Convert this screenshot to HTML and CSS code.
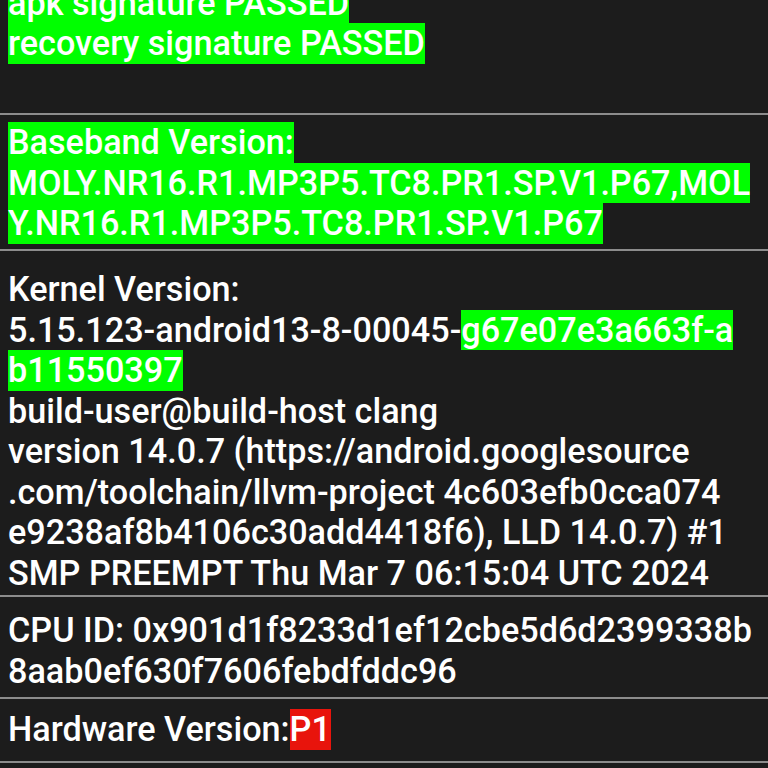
FILE: index.html
```html
<!DOCTYPE html>
<html>
<head>
<meta charset="utf-8">
<link rel="stylesheet" href="styles.css">
</head>
<body>
<div class="list">
  <div class="item item-sig">
    <div class="line"><span class="hl">apk signature PASSED</span></div>
    <div class="line"><span class="hl">recovery signature PASSED</span></div>
    <div class="line"></div>
  </div>
  <div class="sep"></div>
  <div class="item item-baseband">
    <div class="line"><span class="hl">Baseband Version:</span></div>
    <div class="line"><span class="hl">MOLY.NR16.R1.MP3P5.TC8.PR1.SP.V1.P67,MOL</span></div>
    <div class="line"><span class="hl">Y.NR16.R1.MP3P5.TC8.PR1.SP.V1.P67</span></div>
  </div>
  <div class="sep"></div>
  <div class="item item-kernel">
    <div class="line">Kernel Version:</div>
    <div class="line">5.15.123-android13-8-00045-<span class="hl">g67e07e3a663f-a</span></div>
    <div class="line"><span class="hl">b11550397</span></div>
    <div class="line">build-user@build-host clang</div>
    <div class="line">version 14.0.7 (https://android.googlesource</div>
    <div class="line">.com/toolchain/llvm-project 4c603efb0cca074</div>
    <div class="line">e9238af8b4106c30add4418f6), LLD 14.0.7) #1</div>
    <div class="line">SMP PREEMPT Thu Mar 7 06:15:04 UTC 2024</div>
  </div>
  <div class="sep"></div>
  <div class="item item-cpu">
    <div class="line">CPU ID: 0x901d1f8233d1ef12cbe5d6d2399338b</div>
    <div class="line">8aab0ef630f7606febdfddc96</div>
  </div>
  <div class="sep"></div>
  <div class="item item-hw">
    <div class="line">Hardware Version:<span class="hl-red">P1</span></div>
  </div>
  <div class="sep"></div>
</div>
</body>
</html>
```

FILE: styles.css
```css
html, body {
  margin: 0;
  padding: 0;
  background: #1c1c1c;
  height: 100%;
  overflow: hidden;
}
.list {
  font-family: Roboto, "Noto Sans", sans-serif;
  font-size: 34.2px;
  font-weight: 500;
  color: #ffffff;
}
.item {
  padding-left: 8px;
}
.line {
  height: 40.5px;
  line-height: 40.5px;
  white-space: nowrap;
}
.hl {
  display: inline-block;
  background: #00ff00;
  height: 40.5px;
}
.hl-red {
  display: inline-block;
  background: #e8140c;
  height: 40.5px;
}
.sep {
  height: 2px;
  background: #8c8c8c;
}
.item-sig {
  margin-top: -17.5px;
  padding-bottom: 9px;
}
.item-baseband {
  padding-top: 7px;
  padding-bottom: 5.5px;
}
.item-kernel {
  padding-top: 18px;
  padding-bottom: 2px;
}
.item-cpu {
  padding-top: 13px;
  padding-bottom: 6px;
}
.item-hw {
  padding-top: 10px;
  padding-bottom: 11.5px;
}
```
